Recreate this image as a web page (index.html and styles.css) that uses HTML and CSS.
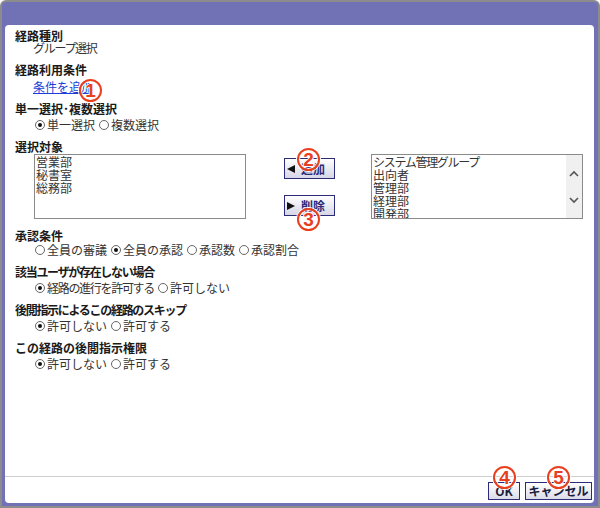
FILE: index.html
```html
<!DOCTYPE html>
<html lang="ja">
<head>
  <meta charset="UTF-8">
  <title>経路設定</title>
  <link rel="stylesheet" href="styles.css">
</head>
<body>
  <div class="window">
    <div class="panel">
      <div class="content">

        <div class="field">
          <div class="label">経路種別</div>
          <div class="value tight"><span class="kana">グループ選択</span></div>
        </div>

        <div class="field">
          <div class="label">経路利用条件</div>
          <div class="value link-row">
            <a href="#" class="link">条件を追加</a>
            <span class="marker m1">1</span>
          </div>
        </div>

        <div class="field">
          <div class="label">単一選択･複数選択</div>
          <div class="value options">
            <span class="opt"><span class="radio on"></span>単一選択</span>
            <span class="opt"><span class="radio"></span>複数選択</span>
          </div>
        </div>

        <div class="field">
          <div class="label">選択対象</div>
          <div class="picker">
            <div class="listbox left-list">
              <div>営業部</div>
              <div>秘書室</div>
              <div>総務部</div>
            </div>
            <div class="move-buttons">
              <button class="move add"><span class="tri-left"></span>追加<span class="marker m2">2</span></button>
              <button class="move del"><span class="tri-right"></span>削除<span class="marker m3">3</span></button>
            </div>
            <div class="listbox right-list">
              <div class="items">
                <div class="kana">システム管理グループ</div>
                <div>出向者</div>
                <div>管理部</div>
                <div>経理部</div>
                <div>開発部</div>
              </div>
              <div class="scroll">
                <svg width="12" height="8" viewBox="0 0 12 8"><polyline points="2,6 6,2 10,6" fill="none" stroke="#555" stroke-width="1.6"/></svg>
                <svg width="12" height="8" viewBox="0 0 12 8"><polyline points="2,2 6,6 10,2" fill="none" stroke="#555" stroke-width="1.6"/></svg>
              </div>
            </div>
          </div>
        </div>

        <div class="field after-list">
          <div class="label">承認条件</div>
          <div class="value options near">
            <span class="opt"><span class="radio"></span>全員の審議</span>
            <span class="opt"><span class="radio on"></span>全員の承認</span>
            <span class="opt"><span class="radio"></span>承認数</span>
            <span class="opt"><span class="radio"></span>承認割合</span>
          </div>
        </div>

        <div class="field">
          <div class="label kana">該当ユーザが存在しない場合</div>
          <div class="value options">
            <span class="opt kana"><span class="radio on"></span>経路の進行を許可する</span>
            <span class="opt"><span class="radio"></span>許可しない</span>
          </div>
        </div>

        <div class="field">
          <div class="label kana">後閲指示によるこの経路のスキップ</div>
          <div class="value options">
            <span class="opt"><span class="radio on"></span>許可しない</span>
            <span class="opt"><span class="radio"></span>許可する</span>
          </div>
        </div>

        <div class="field">
          <div class="label">この経路の後閲指示権限</div>
          <div class="value options">
            <span class="opt"><span class="radio on"></span>許可しない</span>
            <span class="opt"><span class="radio"></span>許可する</span>
          </div>
        </div>

      </div>

      <div class="footer">
        <button class="btn ok">OK<span class="marker m4">4</span></button>
        <button class="btn cancel">キャンセル<span class="marker m5">5</span></button>
      </div>
    </div>
  </div>
</body>
</html>
```

FILE: styles.css
```css
:root {
  --frame: #8c8c8c;
  --head: #7171b5;
  --navy: #2b2b7a;
  --mark: #e8401f;
}

body {
  margin: 0;
  font-family: "Noto Sans CJK JP", "Noto Sans CJK SC", sans-serif;
  font-size: 12px;
  color: #222;
}

/* カナの多い文字列は少し詰める */
.kana {
  letter-spacing: -1.3px;
}

.window {
  width: 600px;
  height: 508px;
  box-sizing: border-box;
  border: 2px solid var(--frame);
  border-radius: 6px 6px 0 0;
  background: var(--head);
  padding: 23px 4px 3px 3px;
}

.panel {
  height: 100%;
  background: #fff;
  border-radius: 4px;
  display: flex;
  flex-direction: column;
}

.content {
  flex: 1;
  padding: 5px 0 0 10px;
}

.field {
  margin-top: 10px;
}

.field:first-child {
  margin-top: 0;
}

.label {
  font-weight: bold;
  line-height: 12px;
  color: #1a1a1a;
}

.value {
  margin-top: 4px;
  line-height: 12px;
  padding-left: 18px;
  color: #333;
}

.value.tight {
  margin-top: 0;
}

.link-row {
  position: relative;
  margin-top: 5px;
}

.link {
  color: #1b3fd6;
  text-decoration: underline;
}

.options {
  padding-left: 20px;
  display: flex;
  gap: 4px;
}

.options.near {
  margin-top: 2px;
}

.opt {
  display: inline-flex;
  align-items: center;
  gap: 2px;
}

.radio {
  width: 10px;
  height: 10px;
  box-sizing: border-box;
  border: 1px solid #666;
  border-radius: 50%;
  background: #fff;
  display: inline-flex;
  align-items: center;
  justify-content: center;
}

.radio.on::after {
  content: "";
  width: 4px;
  height: 4px;
  border-radius: 50%;
  background: #111;
}

/* 選択対象 */
.picker {
  display: flex;
  align-items: flex-start;
  margin-top: 1px;
  padding-left: 19px;
}

.listbox {
  height: 65px;
  box-sizing: border-box;
  border: 1px solid #8a8a8a;
  line-height: 13px;
  color: #333;
  overflow: hidden;
}

.left-list {
  width: 212px;
  padding-left: 1px;
}

.move-buttons {
  width: 51px;
  margin-left: 38px;
  display: flex;
  flex-direction: column;
  gap: 16px;
  padding-top: 4px;
}

button {
  font: inherit;
  cursor: pointer;
}

.move {
  position: relative;
  height: 21px;
  padding: 0 0 0 2px;
  border: 1px solid var(--navy);
  background: linear-gradient(#fff, #d6d6e6);
  color: var(--navy);
  font-weight: bold;
  display: flex;
  align-items: center;
  gap: 6px;
}

.tri-left {
  width: 0;
  height: 0;
  border-top: 4px solid transparent;
  border-bottom: 4px solid transparent;
  border-right: 8px solid #111;
}

.tri-right {
  width: 0;
  height: 0;
  border-top: 4px solid transparent;
  border-bottom: 4px solid transparent;
  border-left: 8px solid #111;
}

.right-list {
  width: 212px;
  margin-left: 36px;
  display: flex;
}

.right-list .items {
  flex: 1;
  padding-left: 1px;
}

.scroll {
  width: 16px;
  background: #f0f0f0;
  display: flex;
  flex-direction: column;
  align-items: center;
  justify-content: center;
  gap: 18px;
}

.field.after-list {
  margin-top: 11px;
}

/* フッター */
.footer {
  height: 27px;
  box-sizing: border-box;
  border-top: 1px solid #cfcfcf;
  display: flex;
  justify-content: flex-end;
  gap: 5px;
  padding: 5px 2px 0 0;
}

.btn {
  position: relative;
  height: 18px;
  padding: 0;
  border: 1px solid var(--navy);
  background: linear-gradient(#fff, #dcdce8);
  color: #1c1c3c;
  font-weight: bold;
  line-height: 14px;
}

.btn.ok {
  width: 32px;
}

.btn.cancel {
  width: 67px;
}

/* 番号マーカー */
.marker {
  position: absolute;
  width: 23px;
  height: 23px;
  box-sizing: border-box;
  border: 2px solid var(--mark);
  border-radius: 50%;
  box-shadow: 0 0 0 1px #fff, inset 0 0 0 1px #fff;
  color: var(--mark);
  font-family: "Liberation Sans", sans-serif;
  font-size: 19px;
  font-weight: bold;
  line-height: 19px;
  letter-spacing: 0;
  text-align: center;
  text-shadow: 1px 0 #fff, -1px 0 #fff, 0 1px #fff, 0 -1px #fff;
}

.m1 { left: 64px; top: -2px; }
.m2 { left: 12px; top: -11px; }
.m3 { left: 12px; top: 12px; }
.m4 { left: 4px; top: -17px; }
.m5 { left: 21px; top: -17px; }
```
